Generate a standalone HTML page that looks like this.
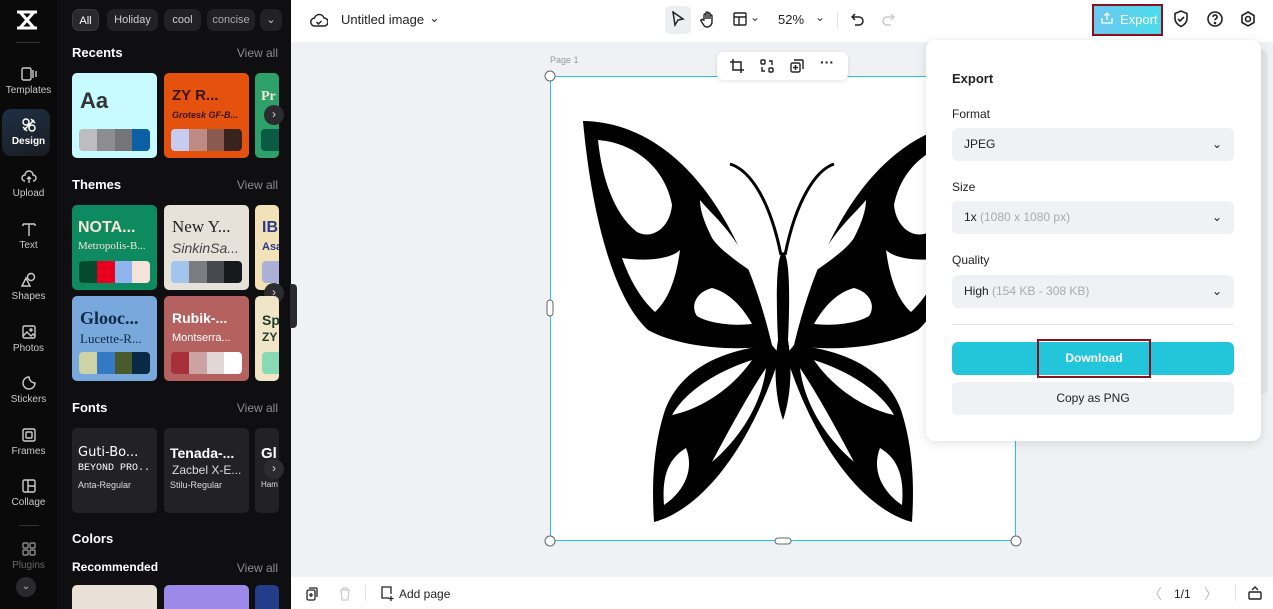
<!DOCTYPE html>
<html style="width:1273px;height:609px;overflow:hidden"><head><meta charset="utf-8"><style>
*{box-sizing:border-box;margin:0;padding:0}
body{width:1273px;height:609px;overflow:hidden;font-family:"Liberation Sans",sans-serif;background:#eff1f4;position:relative}
.abs{position:absolute}
.rail{left:0;top:0;width:57px;height:609px;background:#0a0a0b}
.ri{position:absolute;left:0;width:57px;text-align:center;color:#c9c9cc;font-size:10px}
.ri svg{display:block;margin:0 auto 3px}
.side{left:57px;top:0;width:234px;height:609px;background:#0f0f11;color:#fff;overflow:hidden}
.chip{position:absolute;top:9px;height:22px;border-radius:7px;background:#222226;color:#cfcfd2;font-size:11px;line-height:22px;text-align:center}
.h{position:absolute;font-size:13px;font-weight:bold;color:#fff}
.va{position:absolute;right:13px;font-size:12px;color:#8b8b90}
.card{position:absolute;width:85px;height:85px;border-radius:5px;overflow:hidden}
.pal{position:absolute;left:7px;bottom:7px;width:71px;height:22px;border-radius:4px;overflow:hidden;display:flex}
.pal i{flex:1}
.arr{position:absolute;width:20px;height:20px;border-radius:50%;background:#2c2c30;color:#ddd;font-size:12px;line-height:19px;text-align:center}
.top{left:291px;top:0;width:982px;height:42px;background:#fff}
.bot{left:291px;top:577px;width:982px;height:32px;background:#fff}
.sel{height:33px;border-radius:6px;background:#eff1f4;font-size:12px;color:#222;line-height:33px;padding-left:12px;position:absolute;left:26px;width:282px}
.sel .cv{position:absolute;right:12px;top:0}
.lbl{position:absolute;left:26px;font-size:12px;color:#222}
</style></head><body>
<div class="abs rail">
  <div class="abs" style="left:15px;top:9px">
    <svg width="24" height="22" viewBox="0 0 24 22"><path d="M2 3h20M2 19h20M5 3l14 16M19 3L5 19" stroke="#fff" stroke-width="3" fill="none"/></svg></div>
  <div class="abs" style="left:16px;top:42px;width:24px;height:1px;background:#333"></div>
  <div class="ri" style="top:66px"><svg width="16" height="16" viewBox="0 0 16 16" fill="none" stroke="#ccc" stroke-width="1.4"><rect x="1" y="2" width="9" height="12" rx="1.5"/><path d="M12 4v8M15 5v6"/></svg>Templates</div>
  <div class="abs" style="left:2px;top:109px;width:48px;height:47px;border-radius:9px;background:linear-gradient(160deg,#1e2f45,#1a1d22)"></div>
  <div class="ri" style="top:117px;color:#fff;font-weight:bold"><svg width="16" height="16" viewBox="0 0 16 16" fill="none" stroke="#fff" stroke-width="1.5"><path d="M3 13L13 3M5 2a3 3 0 0 1 0 6a3 3 0 0 1 0-6M11 8a3 3 0 0 1 0 6a3 3 0 0 1 0-6M2 10l4 4M10 2l4 4"/></svg>Design</div>
  <div class="ri" style="top:169px"><svg width="16" height="16" viewBox="0 0 16 16" fill="none" stroke="#ccc" stroke-width="1.4"><path d="M4 12a3 3 0 0 1 0-6a4 4 0 0 1 8 0a3 3 0 0 1 0 6M8 14V8M6 10l2-2 2 2"/></svg>Upload</div>
  <div class="ri" style="top:221px"><svg width="16" height="16" viewBox="0 0 16 16" fill="none" stroke="#ccc" stroke-width="1.4"><path d="M2 3h12M8 3v12M2 3v2M14 3v2"/></svg>Text</div>
  <div class="ri" style="top:272px"><svg width="16" height="16" viewBox="0 0 16 16" fill="none" stroke="#ccc" stroke-width="1.4"><circle cx="10" cy="5" r="3.5"/><path d="M5 6l4 8H1z"/></svg>Shapes</div>
  <div class="ri" style="top:324px"><svg width="16" height="16" viewBox="0 0 16 16" fill="none" stroke="#ccc" stroke-width="1.4"><rect x="2" y="2" width="12" height="12" rx="1.5"/><path d="M2 12l4-4 4 4 2-2 2 2"/><circle cx="10" cy="6" r="1"/></svg>Photos</div>
  <div class="ri" style="top:375px"><svg width="16" height="16" viewBox="0 0 16 16" fill="none" stroke="#ccc" stroke-width="1.4"><path d="M14 8A6 6 0 1 1 8 2c0 3 3 6 6 6z"/></svg>Stickers</div>
  <div class="ri" style="top:427px"><svg width="16" height="16" viewBox="0 0 16 16" fill="none" stroke="#ccc" stroke-width="1.4"><rect x="2" y="2" width="12" height="12" rx="1.5"/><rect x="5" y="5" width="6" height="6" rx="1"/></svg>Frames</div>
  <div class="ri" style="top:478px"><svg width="16" height="16" viewBox="0 0 16 16" fill="none" stroke="#ccc" stroke-width="1.4"><rect x="2" y="2" width="12" height="12" rx="1.5"/><path d="M7 2v12M7 8h7"/></svg>Collage</div>
  <div class="abs" style="left:19px;top:525px;width:20px;height:1px;background:#333"></div>
  <div class="ri" style="top:541px;color:#666"><svg width="16" height="16" viewBox="0 0 16 16" fill="none" stroke="#888" stroke-width="1.4"><rect x="2" y="2" width="5" height="5" rx="1"/><rect x="9" y="2" width="5" height="5" rx="1"/><rect x="2" y="9" width="5" height="5" rx="1"/><rect x="9" y="9" width="5" height="5" rx="1"/></svg>Plugins</div>
  <div class="abs" style="left:16px;top:577px;width:20px;height:20px;border-radius:50%;background:#2a2a2e;color:#bbb;font-size:10px;text-align:center;line-height:20px">⌄</div>
</div>

<div class="abs side">
  <div class="chip" style="left:15px;width:27px;background:#2a2a2e;border:1px solid #3a3a3e;color:#fff">All</div>
  <div class="chip" style="left:50px;width:51px">Holiday</div>
  <div class="chip" style="left:107px;width:37px">cool</div>
  <div class="chip" style="left:150px;width:48px;color:#aaa">concise</div>
  <div class="chip" style="left:203px;width:22px">⌄</div>

  <div class="h" style="left:15px;top:45px">Recents</div><div class="va" style="top:46px">View all</div>
  <div class="card" style="left:15px;top:73px;background:#c8fbff"><div style="position:absolute;left:8px;top:15px;font-size:22px;font-weight:bold;color:#333">Aa</div><div class="pal"><i style="background:#bdbdbf"></i><i style="background:#8d8e91"></i><i style="background:#747578"></i><i style="background:#0b5fa5"></i></div></div>
  <div class="card" style="left:107px;top:73px;background:#e4520e"><div style="position:absolute;left:8px;top:14px;font-size:15px;font-weight:bold;color:#3a1407">ZY R...</div><div style="position:absolute;left:8px;top:37px;font-size:9px;font-style:italic;font-weight:bold;color:#3a1407">Grotesk GF-B...</div><div class="pal"><i style="background:#c8cbf0"></i><i style="background:#c08b85"></i><i style="background:#8a5a50"></i><i style="background:#3b231d"></i></div></div>
  <div class="card" style="left:198px;top:73px;width:24px;background:#2ea06a"><div style="position:absolute;left:6px;top:16px;font-size:14px;font-weight:bold;color:#f3ecd2;font-family:'Liberation Serif',serif">Pr</div><div style="position:absolute;left:6px;bottom:7px;width:18px;height:22px;background:#0a5a45;border-radius:4px 0 0 4px"></div></div>
  <div class="arr" style="left:207px;top:105px">›</div>

  <div class="h" style="left:15px;top:177px">Themes</div><div class="va" style="top:178px">View all</div>
  <div class="card" style="left:15px;top:205px;background:#0d8a60"><div style="position:absolute;left:6px;top:14px;font-size:16px;font-weight:900;color:#f7e5d7">NOTA...</div><div style="position:absolute;left:6px;top:35px;font-size:11px;color:#f7e5d7;font-family:'Liberation Serif',serif">Metropolis-B...</div><div class="pal"><i style="background:#034a30"></i><i style="background:#e8001e"></i><i style="background:#90b4ef"></i><i style="background:#f5e2d8"></i></div></div>
  <div class="card" style="left:107px;top:205px;background:#e6e2da"><div style="position:absolute;left:8px;top:12px;font-size:17px;color:#222;font-family:'Liberation Serif',serif">New Y...</div><div style="position:absolute;left:8px;top:35px;font-size:14px;font-style:italic;color:#444">SinkinSa...</div><div class="pal"><i style="background:#a0c6ef"></i><i style="background:#7b7d80"></i><i style="background:#45484d"></i><i style="background:#17191d"></i></div></div>
  <div class="card" style="left:198px;top:205px;width:24px;background:#f3e2b7"><div style="position:absolute;left:7px;top:14px;font-size:16px;font-weight:bold;color:#2a3a8a">IB</div><div style="position:absolute;left:7px;top:36px;font-size:11px;font-weight:bold;color:#2a3a8a">Asa</div><div style="position:absolute;left:7px;bottom:7px;width:17px;height:22px;background:#aab0d8;border-radius:4px 0 0 4px"></div></div>
  <div class="arr" style="left:207px;top:283px">›</div>
  <div class="card" style="left:15px;top:296px;background:#79a8dc"><div style="position:absolute;left:8px;top:12px;font-size:18px;font-weight:bold;color:#0e2b48;font-family:'Liberation Serif',serif">Glooc...</div><div style="position:absolute;left:8px;top:35px;font-size:13px;color:#0e2b48;font-family:'Liberation Serif',serif">Lucette-R...</div><div class="pal"><i style="background:#cdd3a5"></i><i style="background:#3579c5"></i><i style="background:#4a5a2d"></i><i style="background:#082a44"></i></div></div>
  <div class="card" style="left:107px;top:296px;background:#b56160"><div style="position:absolute;left:8px;top:14px;font-size:14px;font-weight:bold;color:#fff">Rubik-...</div><div style="position:absolute;left:8px;top:36px;font-size:11px;color:#fff">Montserra...</div><div class="pal"><i style="background:#a8303a"></i><i style="background:#cba3a3"></i><i style="background:#e2d7d7"></i><i style="background:#fff"></i></div></div>
  <div class="card" style="left:198px;top:296px;width:24px;background:#f1e5c7"><div style="position:absolute;left:7px;top:16px;font-size:14px;font-weight:bold;color:#1f3a2e">Sp</div><div style="position:absolute;left:7px;top:34px;font-size:12px;font-weight:bold;color:#1f3a2e">ZY</div><div style="position:absolute;left:7px;bottom:7px;width:17px;height:22px;background:#88d9b5;border-radius:4px 0 0 4px"></div></div>

  <div class="h" style="left:15px;top:400px">Fonts</div><div class="va" style="top:401px">View all</div>
  <div class="card" style="left:15px;top:428px;background:#222226"><div style="position:absolute;left:6px;top:17px;font-size:13px;color:#fff;font-family:'DejaVu Sans',sans-serif">Guti-Bo...</div><div style="position:absolute;left:6px;top:35px;font-size:10px;color:#fff;font-family:'Liberation Mono',monospace;white-space:nowrap">BEYOND PRO..</div><div style="position:absolute;left:6px;top:52px;font-size:9px;color:#ddd">Anta-Regular</div></div>
  <div class="card" style="left:107px;top:428px;background:#222226"><div style="position:absolute;left:6px;top:17px;font-size:14px;font-weight:bold;color:#fff">Tenada-...</div><div style="position:absolute;left:8px;top:35px;font-size:12px;color:#ddd">Zacbel X-E...</div><div style="position:absolute;left:6px;top:52px;font-size:9px;color:#ddd">Stilu-Regular</div></div>
  <div class="card" style="left:198px;top:428px;width:24px;background:#222226"><div style="position:absolute;left:6px;top:17px;font-size:15px;font-weight:bold;color:#fff">Gl</div><div style="position:absolute;left:6px;top:52px;font-size:8px;color:#ddd">Ham</div></div>
  <div class="arr" style="left:207px;top:459px">›</div>

  <div class="h" style="left:15px;top:531px">Colors</div>
  <div style="position:absolute;left:15px;top:560px;font-size:12px;font-weight:bold;color:#fff">Recommended</div><div class="va" style="top:561px">View all</div>
  <div class="card" style="left:15px;top:585px;height:24px;border-radius:5px 5px 0 0;background:#e9e1d8"></div>
  <div class="card" style="left:107px;top:585px;height:24px;border-radius:5px 5px 0 0;background:#9b8ae8"></div>
  <div class="card" style="left:198px;top:585px;height:24px;width:24px;border-radius:5px 5px 0 0;background:#233d8a"></div>
</div>
<div class="abs" style="left:290px;top:284px;width:7px;height:44px;background:#2a2a2e;border-radius:0 4px 4px 0"></div>

<div class="abs top">
  <svg class="abs" style="left:19px;top:12px" width="18" height="16" viewBox="0 0 18 16" fill="none" stroke="#222" stroke-width="1.5"><path d="M5 14a4 4 0 0 1-.5-8A5 5 0 0 1 14 6a3.5 3.5 0 0 1 0 8z"/><path d="M6.5 10l2 2 3-3"/></svg>
  <div class="abs" style="left:50px;top:12px;font-size:13px;color:#222">Untitled image</div>
  <div class="abs" style="left:138px;top:10px;font-size:13px;color:#333">⌄</div>
  <div class="abs" style="left:374px;top:6px;width:26px;height:28px;border-radius:5px;background:#eceef1"></div>
  <svg class="abs" style="left:380px;top:11px" width="14" height="16" viewBox="0 0 14 16" fill="none" stroke="#222" stroke-width="1.5"><path d="M2 1l10 7-5 1-3 5z"/></svg>
  <svg class="abs" style="left:409px;top:10px" width="16" height="18" viewBox="0 0 16 18" fill="none" stroke="#222" stroke-width="1.4"><path d="M4 10V5a1 1 0 0 1 2 0v4V3a1 1 0 0 1 2 0v6V4a1 1 0 0 1 2 0v5V6a1 1 0 0 1 2 0v6a5 5 0 0 1-5 5c-2 0-3-1-4-3l-2-3a1 1 0 0 1 2-1z"/></svg>
  <svg class="abs" style="left:442px;top:12px" width="14" height="14" viewBox="0 0 14 14" fill="none" stroke="#222" stroke-width="1.4"><rect x="1" y="1" width="12" height="12" rx="1"/><path d="M1 5h12M6 5v8"/></svg>
  <div class="abs" style="left:459px;top:10px;font-size:12px;color:#333">⌄</div>
  <div class="abs" style="left:487px;top:12px;font-size:13px;color:#222">52%</div>
  <div class="abs" style="left:524px;top:10px;font-size:12px;color:#333">⌄</div>
  <div class="abs" style="left:546px;top:12px;width:1px;height:17px;background:#e4e4e4"></div>
  <svg class="abs" style="left:560px;top:12px" width="14" height="14" viewBox="0 0 14 14" fill="none" stroke="#222" stroke-width="1.5"><path d="M4 2L1 5l3 3M1 5h7a4 4 0 0 1 0 8H4"/></svg>
  <svg class="abs" style="left:590px;top:12px" width="14" height="14" viewBox="0 0 14 14" fill="none" stroke="#ccc" stroke-width="1.5"><path d="M10 2l3 3-3 3M13 5H6a4 4 0 0 0 0 8h4"/></svg>
  <div class="abs" style="left:801px;top:4px;width:71px;height:32px;border:2px solid #8b1020;background:linear-gradient(90deg,#6cc8ee,#4bdcec);color:#fff;font-size:13px;line-height:28px;padding-left:26px">Export</div>
  <svg class="abs" style="left:810px;top:12px" width="12" height="12" viewBox="0 0 12 12" fill="none" stroke="#fff" stroke-width="1.3"><path d="M6 8V1M3.5 3.5L6 1l2.5 2.5M1 6v5h10V6"/></svg>
  <svg class="abs" style="left:882px;top:10px" width="16" height="18" viewBox="0 0 16 18" fill="none" stroke="#222" stroke-width="1.6"><path d="M8 1l6 2.5v5c0 4-3 6.5-6 8-3-1.5-6-4-6-8v-5z"/><path d="M5 9l2 2 4-4"/></svg>
  <svg class="abs" style="left:916px;top:11px" width="16" height="16" viewBox="0 0 16 16" fill="none" stroke="#222" stroke-width="1.6"><circle cx="8" cy="8" r="7"/><path d="M6 6a2 2 0 1 1 3 1.7c-.7.4-1 .8-1 1.6"/><circle cx="8" cy="12" r=".5" fill="#222"/></svg>
  <svg class="abs" style="left:949px;top:11px" width="16" height="16" viewBox="0 0 16 16" fill="none" stroke="#222" stroke-width="1.6"><path d="M8 1l6 3.5v7L8 15l-6-3.5v-7z"/><circle cx="8" cy="8" r="2.5"/></svg>
</div>

<div class="abs" style="left:550px;top:55px;font-size:9px;color:#999">Page 1</div>
<div class="abs" style="left:550px;top:76px;width:466px;height:465px;background:#fff;border:1.5px solid #22c6dd"></div>
<svg class="abs" style="left:0;top:0" width="1273" height="609">
 <defs>
  <g id="L">
   <path fill="#000" d="M583 121C660 122 735 190 772 345C740 352 680 348 648 330C615 300 592 220 583 121Z"/>
   <path fill="#000" d="M772 345C720 350 680 370 665 410C652 450 652 490 654 522C700 510 750 450 780 355Z"/>
   <path fill="#fff" d="M598 140C635 143 665 168 672 205C670 228 652 240 637 232C615 215 602 180 598 140Z"/>
   <path fill="#fff" d="M622 258C650 262 672 258 680 250C676 280 668 300 655 312C640 298 630 280 622 258Z"/>
   <path fill="#fff" d="M712 288C696 292 690 306 697 316C710 324 735 326 752 324C742 306 728 292 712 288Z"/>
   <path fill="#fff" d="M700 200C712 215 735 232 752 272C738 262 720 250 712 238C704 222 700 210 700 200Z"/>
   <path fill="#fff" d="M672 415C685 392 715 372 752 360C735 385 705 408 672 415Z"/>
   <path fill="#fff" d="M664 505C662 480 666 460 686 448C694 468 686 490 664 505Z"/>
   <path fill="#fff" d="M712 462C730 428 748 395 766 368C762 402 742 436 712 462Z"/>
  </g>
 </defs>
 <use href="#L"/>
 <use href="#L" transform="translate(1566 0) scale(-1 1)"/>
 <path fill="#000" d="M783 252C790 255 790 300 788 340C793 370 790 400 783 420C776 400 773 370 778 340C776 300 776 255 783 252Z"/>
 <path d="M781 255C770 200 750 170 730 164" stroke="#000" stroke-width="3" fill="none"/>
 <path d="M785 255C796 200 816 170 834 164" stroke="#000" stroke-width="3" fill="none"/>
 <g fill="#fff" stroke="#666" stroke-width="1"><circle cx="550" cy="76" r="5"/><circle cx="1016" cy="541" r="5"/><circle cx="550" cy="541" r="5"/><rect x="547" y="300" width="6" height="16" rx="3"/><rect x="775" y="538" width="16" height="6" rx="3"/></g>
</svg>
<div class="abs" style="left:717px;top:52px;width:131px;height:28px;background:#fff;border-radius:6px;box-shadow:0 1px 4px rgba(0,0,0,.12)">
  <svg class="abs" style="left:13px;top:7px" width="14" height="14" viewBox="0 0 14 14" fill="none" stroke="#222" stroke-width="1.5"><path d="M3 0v11h11M0 3h11v11"/></svg>
  <svg class="abs" style="left:43px;top:7px" width="14" height="14" viewBox="0 0 14 14" fill="none" stroke="#222" stroke-width="1.4"><rect x="1" y="1" width="4" height="4" rx="1"/><rect x="9" y="9" width="4" height="4" rx="1"/><path d="M9 2h3v4M5 12H2V8"/></svg>
  <svg class="abs" style="left:73px;top:7px" width="14" height="14" viewBox="0 0 14 14" fill="none" stroke="#222" stroke-width="1.4"><rect x="1" y="4" width="9" height="9" rx="1.5"/><path d="M4 1h8a1 1 0 0 1 1 1v8M5.5 6v5M3 8.5h5"/></svg>
  <div class="abs" style="left:103px;top:2px;font-size:14px;font-weight:bold;color:#222">···</div>
</div>

<div class="abs" style="left:1255px;top:50px;width:13px;height:345px;background:#e4e6ea;border-radius:0 8px 8px 0"></div>
<div class="abs" style="left:926px;top:40px;width:335px;height:401px;background:#fff;border-radius:9px;box-shadow:0 2px 10px rgba(0,0,0,.12)">
  <div class="abs" style="left:26px;top:31px;font-size:13px;font-weight:bold;color:#222">Export</div>
  <div class="lbl" style="top:67px">Format</div>
  <div class="sel" style="top:88px">JPEG<span class="cv">⌄</span></div>
  <div class="lbl" style="top:140px">Size</div>
  <div class="sel" style="top:161px">1x <span style="color:#aaa">(1080 x 1080 px)</span><span class="cv">⌄</span></div>
  <div class="lbl" style="top:213px">Quality</div>
  <div class="sel" style="top:235px">High <span style="color:#aaa">(154 KB - 308 KB)</span><span class="cv">⌄</span></div>
  <div class="abs" style="left:26px;top:284px;width:282px;height:1px;background:#e6e6e6"></div>
  <div class="abs" style="left:26px;top:302px;width:282px;height:33px;border-radius:6px;background:#22c5da"></div>
  <div class="abs" style="left:111px;top:299px;width:114px;height:39px;border:2.5px solid #8b1020;color:#fff;font-size:12px;font-weight:bold;text-align:center;line-height:34px">Download</div>
  <div class="abs" style="left:26px;top:342px;width:282px;height:33px;border-radius:6px;background:#eff1f4;font-size:12px;color:#222;text-align:center;line-height:33px">Copy as PNG</div>
</div>

<div class="abs bot">
  <svg class="abs" style="left:15px;top:10px" width="12" height="14" viewBox="0 0 12 14" fill="none" stroke="#222" stroke-width="1.3"><rect x="1" y="3" width="8" height="10" rx="1.5"/><path d="M3 1h7a1 1 0 0 1 1 1v8M5 6v4M3 8h4"/></svg>
  <svg class="abs" style="left:48px;top:10px" width="12" height="14" viewBox="0 0 12 14" fill="none" stroke="#ccc" stroke-width="1.3"><path d="M1 3h10M4 3V1h4v2M2 3l1 10h6l1-10"/></svg>
  <div class="abs" style="left:74px;top:8px;width:1px;height:16px;background:#e4e4e4"></div>
  <svg class="abs" style="left:89px;top:9px" width="14" height="15" viewBox="0 0 14 15" fill="none" stroke="#222" stroke-width="1.3"><path d="M9 12H2V1h9v7M11 10v5M8.5 12.5h5"/></svg>
  <div class="abs" style="left:108px;top:10px;font-size:12px;color:#222">Add page</div>
  <div class="abs" style="left:857px;top:7px;font-size:14px;color:#bbb">〈</div>
  <div class="abs" style="left:883px;top:10px;font-size:12px;color:#222">1/1</div>
  <div class="abs" style="left:913px;top:7px;font-size:14px;color:#bbb">〉</div>
  <div class="abs" style="left:944px;top:8px;width:1px;height:16px;background:#e4e4e4"></div>
  <svg class="abs" style="left:957px;top:9px" width="14" height="14" viewBox="0 0 14 14" fill="none" stroke="#222" stroke-width="1.4"><rect x="1" y="6" width="12" height="7" rx="1"/><path d="M4 4l3-3 3 3"/></svg>
</div>
</body></html>
